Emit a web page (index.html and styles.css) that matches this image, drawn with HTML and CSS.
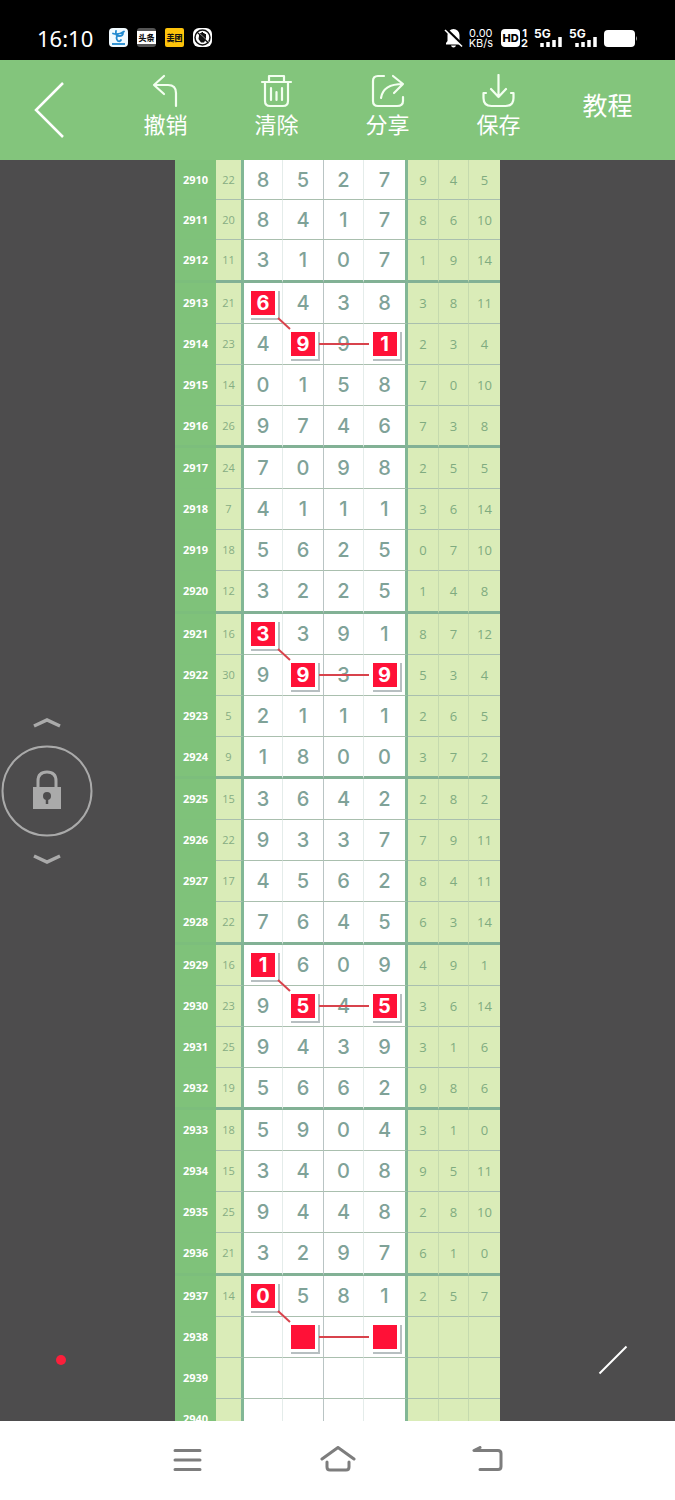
FILE: index.html
```html
<!DOCTYPE html>
<html lang="zh-CN">
<head>
<meta charset="utf-8">
<meta name="viewport" content="width=device-width, initial-scale=1">
<title>走势图</title>
<link rel="stylesheet" href="styles.css">
</head>
<body>
<div class="app">
  <header class="status">
    <time class="clock">16:10</time>
    <div class="notices">
      <svg width="19" height="19" viewBox="0 0 19 19"><rect width="19" height="19" rx="4" fill="#f1faff"/><path d="M4 5.500q5 2 11-2M7 3q-1 5 3 5 4 0 4-3M9 7q-3 3 0 6 2 1 3-1" fill="none" stroke="#2189cf" stroke-width="1.800" stroke-linecap="round"/><path d="M3 16h13" stroke="#2189cf" stroke-width="1.800"/></svg>
      <svg width="19" height="19" viewBox="0 0 19 19"><rect width="19" height="19" rx="3" fill="#555"/><rect y="3" width="19" height="13" fill="#fff"/><text x="9.500" y="13" class="badge-text">头条</text></svg>
      <svg width="19" height="19" viewBox="0 0 19 19"><rect width="19" height="19" rx="2" fill="#fdc30b"/><text x="9.500" y="13" class="badge-text">美团</text></svg>
      <svg width="19" height="19" viewBox="0 0 19 19"><rect width="19" height="19" rx="6" fill="#fff"/><circle cx="9.500" cy="9.500" r="7.500" fill="none" stroke="#111" stroke-width="1.500"/><path d="M6 8V6h1V5h1.500V4H10v1h1.500v1H13v5l-2 3.500H8L5.500 11z" fill="#111"/><path d="M5 4l11 10.500" stroke="#fff" stroke-width="1"/><path d="M4 4l11.500 11" stroke="#111" stroke-width="1.200"/></svg>
    </div>
    <div class="signals">
      <svg width="19" height="20" viewBox="0 0 19 20"><path d="M9.500 1a6 6 0 0 0-6 6v6L2 15v1.500h15V15l-1.500-2V7a6 6 0 0 0-6-6zM7 17.500h5q-.5 2-2.500 2t-2.500-2z" fill="#fff"/><path d="M2 1l17 16.500" stroke="#000" stroke-width="3"/><path d="M1 2l17 16.500" stroke="#fff" stroke-width="1.600"/></svg>
      <div class="speed"><span>0.00</span><span>KB/s</span></div>
      <svg width="27" height="20" viewBox="0 0 27 20"><rect y="1" width="19" height="18" rx="4" fill="#fff"/><text x="9.500" y="14" class="hd-text">HD</text><text x="23.500" y="8.500" class="sim-text">1</text><text x="23.500" y="19" class="sim-text">2</text></svg>
      <svg width="29" height="20" viewBox="0 0 29 20"><text x="0" y="9.500" class="net-text">5G</text><path d="M8 19v-4M14 19v-5M20 19v-7M26 19V9" stroke="#fff" stroke-width="3.500"/></svg>
      <svg width="29" height="20" viewBox="0 0 29 20"><text x="0" y="9.500" class="net-text">5G</text><path d="M8 19v-4M14 19v-5M20 19v-7M26 19V9" stroke="#fff" stroke-width="3.500"/></svg>
      <svg width="34" height="20" viewBox="0 0 34 20"><rect y="2" width="31" height="17" rx="4" fill="#fff"/><path d="M32 8q2 2.500 0 5z" fill="#aaa"/></svg>
    </div>
  </header>

  <nav class="toolbar">
    <button class="tool back" aria-label="返回"><svg width="32" height="58" viewBox="0 0 32 58"><path d="M30 2L3 29l27 27" fill="none" stroke="#fff" stroke-width="2.500"/></svg></button>
    <button class="tool"><svg width="34" height="34" viewBox="0 0 34 34"><path d="M15 2L5 11l10 9M5 11h14q8 0 8 8v13" class="tool-line"/></svg><span>撤销</span></button>
    <button class="tool"><svg width="34" height="34" viewBox="0 0 34 34"><path d="M2 8h29M9 8V2h15v6M5 8v19q0 5 5 5h13q5 0 5-5V8M11 14v12M16.500 18v8M22 14v12" class="tool-line"/></svg><span>清除</span></button>
    <button class="tool"><svg width="34" height="34" viewBox="0 0 34 34"><path d="M13 2H7Q2 2 2 7v20q0 5 5 5h19q6 0 6-5v-4M10 24q2-14 22-14M22 2l10 8-9 9" class="tool-line"/></svg><span>分享</span></button>
    <button class="tool"><svg width="34" height="34" viewBox="0 0 34 34"><path d="M16.500 1v22M9 15l7.500 8 7.500-8M4 19H1.500v5q0 8 8 8h14q8 0 8-8v-5H29" class="tool-line"/></svg><span>保存</span></button>
    <button class="tool tutorial">教程</button>
  </nav>

  <main class="board">
    <table class="chart">
      <colgroup><col class="c-issue"><col class="c-sum"><col class="c-d1"><col class="c-d2"><col class="c-d3"><col class="c-d4"><col class="c-x"><col class="c-y"><col class="c-x"></colgroup>
      <tbody class="lead">
        <tr><th>2910<td>22<td>8<td>5<td>2<td>7<td>9<td>4<td>5
        <tr><th>2911<td>20<td>8<td>4<td>1<td>7<td>8<td>6<td>10
        <tr><th>2912<td>11<td>3<td>1<td>0<td>7<td>1<td>9<td>14
      <tbody>
        <tr><th>2913<td>21<td><span class="mark">6<svg class="link" width="40" height="40"><path d="M27 27l12 11"/></svg></span><td>4<td>3<td>8<td>3<td>8<td>11
        <tr><th>2914<td>23<td>4<td><span class="mark">9<svg class="link" width="80" height="24"><path d="M28 12h50"/></svg></span><td>9<td><span class="mark">1</span><td>2<td>3<td>4
        <tr><th>2915<td>14<td>0<td>1<td>5<td>8<td>7<td>0<td>10
        <tr><th>2916<td>26<td>9<td>7<td>4<td>6<td>7<td>3<td>8
      <tbody>
        <tr><th>2917<td>24<td>7<td>0<td>9<td>8<td>2<td>5<td>5
        <tr><th>2918<td>7<td>4<td>1<td>1<td>1<td>3<td>6<td>14
        <tr><th>2919<td>18<td>5<td>6<td>2<td>5<td>0<td>7<td>10
        <tr><th>2920<td>12<td>3<td>2<td>2<td>5<td>1<td>4<td>8
      <tbody>
        <tr><th>2921<td>16<td><span class="mark">3<svg class="link" width="40" height="40"><path d="M27 27l12 11"/></svg></span><td>3<td>9<td>1<td>8<td>7<td>12
        <tr><th>2922<td>30<td>9<td><span class="mark">9<svg class="link" width="80" height="24"><path d="M28 12h50"/></svg></span><td>3<td><span class="mark">9</span><td>5<td>3<td>4
        <tr><th>2923<td>5<td>2<td>1<td>1<td>1<td>2<td>6<td>5
        <tr><th>2924<td>9<td>1<td>8<td>0<td>0<td>3<td>7<td>2
      <tbody>
        <tr><th>2925<td>15<td>3<td>6<td>4<td>2<td>2<td>8<td>2
        <tr><th>2926<td>22<td>9<td>3<td>3<td>7<td>7<td>9<td>11
        <tr><th>2927<td>17<td>4<td>5<td>6<td>2<td>8<td>4<td>11
        <tr><th>2928<td>22<td>7<td>6<td>4<td>5<td>6<td>3<td>14
      <tbody>
        <tr><th>2929<td>16<td><span class="mark">1<svg class="link" width="40" height="40"><path d="M27 27l12 11"/></svg></span><td>6<td>0<td>9<td>4<td>9<td>1
        <tr><th>2930<td>23<td>9<td><span class="mark">5<svg class="link" width="80" height="24"><path d="M28 12h50"/></svg></span><td>4<td><span class="mark">5</span><td>3<td>6<td>14
        <tr><th>2931<td>25<td>9<td>4<td>3<td>9<td>3<td>1<td>6
        <tr><th>2932<td>19<td>5<td>6<td>6<td>2<td>9<td>8<td>6
      <tbody>
        <tr><th>2933<td>18<td>5<td>9<td>0<td>4<td>3<td>1<td>0
        <tr><th>2934<td>15<td>3<td>4<td>0<td>8<td>9<td>5<td>11
        <tr><th>2935<td>25<td>9<td>4<td>4<td>8<td>2<td>8<td>10
        <tr><th>2936<td>21<td>3<td>2<td>9<td>7<td>6<td>1<td>0
      <tbody>
        <tr><th>2937<td>14<td><span class="mark">0<svg class="link" width="40" height="40"><path d="M27 27l12 11"/></svg></span><td>5<td>8<td>1<td>2<td>5<td>7
        <tr><th>2938<td><td><td><span class="mark"><svg class="link" width="80" height="24"><path d="M28 12h50"/></svg></span><td><td><span class="mark"></span><td><td><td>
        <tr><th>2939<td><td><td><td><td><td><td><td>
        <tr><th>2940<td><td><td><td><td><td><td><td>
    </table>
    <button class="lock" aria-label="锁定">
      <svg width="94" height="150" viewBox="0 0 94 150"><g fill="none" stroke="#aaa"><path d="M34 10l13-6 13 6M34 140l13 6 13-6" stroke-width="3.500"/><circle cx="47" cy="75" r="44.500" stroke-width="2"/><path d="M38 72v-7q0-9 9-9t9 9v7" stroke-width="3"/></g><path d="M33 71h28v22H33z" fill="#aaa"/><circle cx="47" cy="80" r="4" fill="#4d4c4d"/><path d="M47 80v8" stroke="#4d4c4d" stroke-width="2.500"/></svg>
    </button>
    <button class="color" aria-label="颜色"></button>
    <button class="line" aria-label="直线"><svg width="30" height="30" viewBox="0 0 30 30"><path d="M1.500 28.500l27-27" stroke="#fff" stroke-width="2"/></svg></button>
  </main>

  <footer class="navbar">
    <button class="key" aria-label="菜单"><svg width="36" height="30" viewBox="0 0 36 30"><path d="M5 4.500h25M5 14h25M5 23.500h25"/></svg></button>
    <button class="key" aria-label="主页"><svg width="36" height="30" viewBox="0 0 36 30"><path d="M2 13L18 1.500 34 13M7 16v5q0 3 3 3h16q3 0 3-3v-5"/></svg></button>
    <button class="key" aria-label="后退"><svg width="36" height="30" viewBox="0 0 36 30"><path d="M10 1.500L4 4.500h24q3 0 3 3v13q0 3-3 3H10"/></svg></button>
  </footer>
</div>
</body>
</html>
```
FILE: styles.css
```css
* { box-sizing: border-box; }

body {
  margin: 0;
  font-family: Inter, "Noto Sans CJK SC", sans-serif;
  background: #4d4c4d;
}

button {
  padding: 0;
  border: 0;
  background: none;
  color: inherit;
  font: inherit;
}

svg { display: block; }

.app {
  display: flex;
  flex-direction: column;
  height: 100vh;
}

/* Status bar */
.status {
  display: flex;
  flex: none;
  align-items: center;
  height: 60px;
  padding: 15px 37px 0;
  background: #000;
  color: #fff;
}
.clock { font-family: "Noto Sans", sans-serif; font-size: 22px; line-height: 24px; }
.notices { display: flex; gap: 9px; margin-left: 16px; }
.signals { display: flex; align-items: center; gap: 6px; margin-left: auto; }
.speed {
  display: flex;
  flex-direction: column;
  align-items: center;
  margin-right: 2px;
  font-size: 11px;
  line-height: 10px;
}
.badge-text { font-size: 8px; font-weight: 900; text-anchor: middle; fill: #111; }
.hd-text { font-size: 11px; font-weight: 800; text-anchor: middle; fill: #000; }
.sim-text { font-size: 11px; font-weight: 700; text-anchor: middle; fill: #fff; }
.net-text { font-size: 12px; font-weight: 700; fill: #fff; }

/* Toolbar */
.toolbar {
  display: grid;
  flex: none;
  grid-template-columns: 110fr repeat(4, 111fr) 107fr;
  height: 100px;
  padding-right: 14px;
  background: #83c57c;
  color: #fff;
}
.tool {
  display: flex;
  flex-direction: column;
  align-items: center;
  justify-content: flex-start;
  gap: 5px;
  padding-top: 14px;
  font-size: 22px;
  line-height: 24px;
  white-space: nowrap;
}
.back { justify-content: center; padding: 0 12px 0 0; }
.tutorial { justify-content: center; padding: 0 0 8px; font-size: 25px; }
.tool-line {
  fill: none;
  stroke: #f3fff0;
  stroke-width: 2.200;
  stroke-linecap: round;
  stroke-linejoin: round;
}

/* Chart */
.board {
  position: relative;
  display: flex;
  flex: 1;
  align-items: flex-start;
  justify-content: center;
  min-height: 0;
  overflow: hidden;
}
.chart {
  flex: none;
  width: 325px;
  table-layout: fixed;
  border-collapse: separate;
  border-spacing: 0;
  background: #fff;
}
.c-issue { width: 41px; }
.c-sum { width: 28px; }
.c-d1 { width: 39px; }
.c-d2 { width: 41px; }
.c-d3 { width: 40px; }
.c-d4 { width: 44px; }
.c-x { width: 31px; }
.c-y { width: 30px; }

.chart tr { height: 41px; }
.chart .lead tr { height: 40px; }
.chart tr:last-child { height: 42px; }
.chart tbody:nth-of-type(odd) tr:last-child { height: 43px; }

.chart th,
.chart td {
  padding: 0;
  text-align: center;
  border-bottom: 1px solid #a9bfae;
  border-right: 1px solid #e4ecea;
  color: #7fa298;
  font-size: 20px;
  line-height: 24px;
  font-weight: 500;
}
.chart th {
  border-right: 0;
  border-bottom-color: #7fc17b;
  background: #7fc27a;
  color: #fff;
  font-family: "Open Sans", sans-serif;
  font-size: 11px;
  font-weight: 700;
}
.chart td:nth-child(2) {
  background: #daecb8;
  color: #86ad83;
  font-family: "Open Sans", sans-serif;
  font-size: 11px;
  border-right: 3px solid #82b795;
}
.chart td:nth-child(4) { border-right-color: #b9c4c4; }
.chart td:nth-child(6) { border-right: 3px solid #82b795; }
.chart td:nth-child(n+7) {
  background: #daecb8;
  border-right-color: #c5daae;
  color: #7fab80;
  font-family: "Open Sans", sans-serif;
  font-size: 13px;
}
.chart td:last-child { border-right: 0; }
.chart tr:last-child td { border-bottom: 3px solid #82b195; }
.chart tr:last-child th { border-bottom: 3px solid #7cbe7c; }

.mark {
  position: relative;
  display: block;
  width: 24px;
  height: 24px;
  margin: 0 auto;
  background: #ff1137;
  color: #fff;
  font-weight: 700;
}
.mark::after {
  content: "";
  position: absolute;
  inset: 0 -5px -5px 0;
  border: solid #b7bfc1;
  border-width: 0 2px 2px 0;
}
.link {
  position: absolute;
  top: 0;
  left: 0;
  z-index: 1;
  fill: none;
  stroke: #d8434c;
  stroke-width: 2;
}

/* Floating controls */
.lock { position: absolute; left: 0; top: 556px; }
.color {
  position: absolute;
  left: 56px;
  bottom: 56px;
  width: 10px;
  height: 10px;
  border-radius: 50%;
  background: #fb1f3b;
}
.line { position: absolute; right: 47px; bottom: 46px; }

/* System keys */
.navbar {
  display: grid;
  flex: none;
  grid-template-columns: repeat(3, 1fr);
  height: 79px;
  padding: 0 calc(100% / 6);
  background: #fff;
}
.key { display: flex; align-items: center; justify-content: center; }
.key svg { fill: none; stroke: #7d7d7d; stroke-width: 3; stroke-linecap: round; stroke-linejoin: round; }
```
